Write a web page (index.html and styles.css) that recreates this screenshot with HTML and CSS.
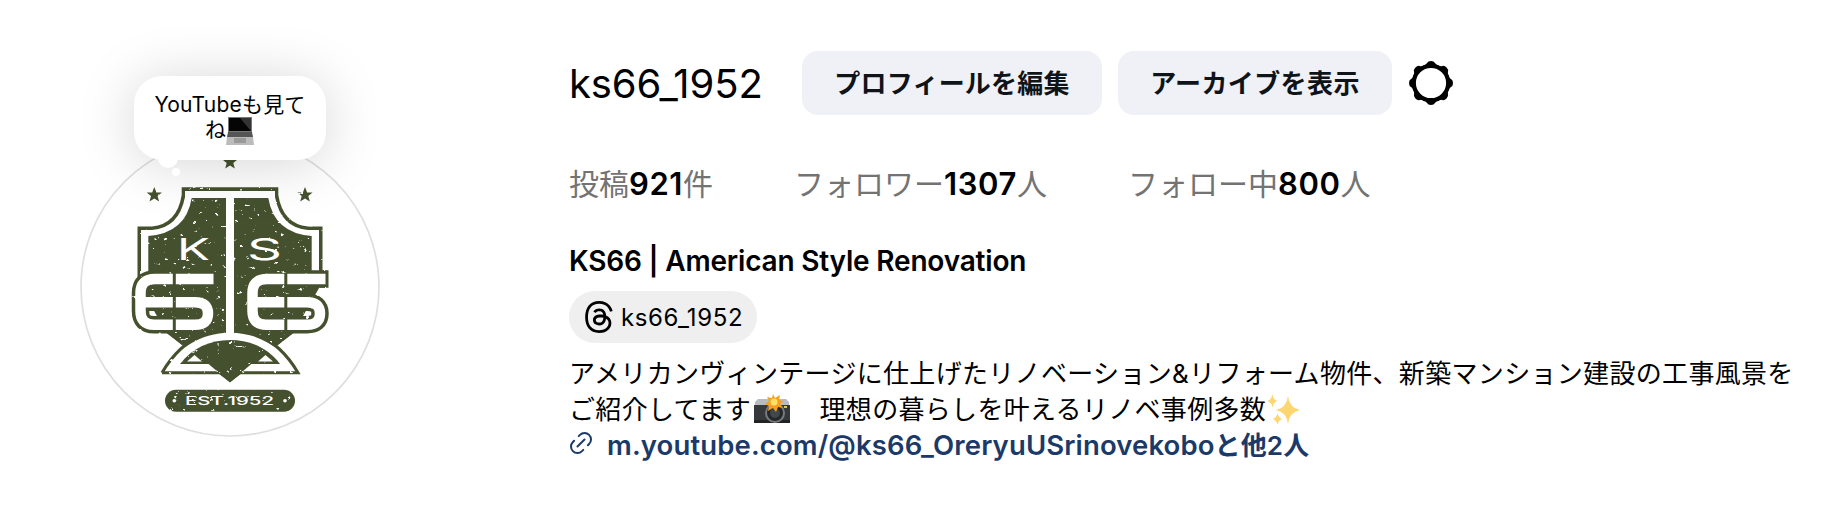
FILE: index.html
```html
<!DOCTYPE html>
<html lang="ja">

    <head>
        <meta charset="UTF-8">
        <meta name="viewport" content="width=device-width, initial-scale=1.0">
        <title>ks66_1952</title>

        <link rel="stylesheet" href="styles.css">
    </head>

    <body>

        <main class="profile">
            <div class="avatar">
                <svg class="logo" viewBox="0 0 300 300">
                    <defs>
                        <filter id="worn" filterUnits="userSpaceOnUse" x="0" y="0" width="300" height="300">
                            <feTurbulence type="fractalNoise" baseFrequency="0.17 0.24" numOctaves="4" seed="8" result="noise"/>
                            <feColorMatrix in="noise" type="matrix" values="0 0 0 0 0  0 0 0 0 0  0 0 0 0 0  14 0 0 0 -10" result="specks"/>
                            <feComposite in="SourceGraphic" in2="specks" operator="out"/>
                        </filter>
                        <path id="star" d="M0-8 2.1-2.6 7.6-2.5 3.3 1 4.8 6.5 0 3.4-4.8 6.5-3.3 1-7.6-2.5-2.1-2.6z"/>
                        <path id="six" d="M133.500 142H75Q60.500 142 60.500 156V174Q60.500 187.700 74 187.700H115Q128 187.700 128 176.500T115 165.300H61"/>
                    </defs>

                    <circle class="ring" cx="150" cy="150" r="149"/>

                    <g class="green" filter="url(#worn)">
                        <use href="#star" x="150" y="25"/>
                        <use href="#star" x="74.3" y="58"/>
                        <use href="#star" x="225" y="58"/>

                        <!-- shield -->
                        <path d="M101.7 50.3H198.3V58Q203 87 228 89.5H242.5V145L213.3 196 150 245.3 86.7 196 57.5 145V89.5H72Q97 87 101.7 58z"/>
                        <path class="white" d="M105 54H195V60Q201 91 228 93H239V145H61V93H72Q99 91 105 60z"/>
                        <path d="M111.7 61H188.3Q194 96 231.7 99V145L213.3 196 150 245.3 86.7 196 68.3 145V99Q106 96 111.7 61z"/>
                        <rect class="white" x="146" y="58" width="8" height="142"/>

                        <!-- 66 -->
                        <use class="outline" href="#six"/>
                        <use class="outline" href="#six" x="112"/>
                        <path class="outline" d="M240 142H248.500"/>
                        <use class="number" href="#six"/>
                        <use class="number" href="#six" x="112"/>
                        <rect class="white" x="146" y="130" width="8" height="70"/>
                        <path d="M92.800 136h3v60h-3zM204.300 136h3v60h-3z"/>

                        <!-- dome -->
                        <path class="white" d="M82 236C96 212 120 195.700 150 195.700S204 212 218 236z"/>
                        <path class="line" d="M82 235.700H218C204 212 187 201.500 176 197M82 235.700C96 212 113 201.500 124 197"/>
                        <path d="M100 227C112 211 130 203 150 203S188 211 200 227z"/>
                        <path class="white" d="M107 224.500 114.500 218 122 224.500zM193 224.500 185.500 218 178 224.500z"/>
                        <path d="M118 218H182L150 245.300z"/>

                        <rect x="85" y="252.700" width="130" height="22" rx="11"/>
                        <circle class="white" cx="94.300" cy="263.700" r="1.800"/>
                        <circle class="white" cx="205" cy="263.700" r="1.800"/>
                    </g>

                    <text class="letter" x="97" y="123.300" textLength="33" lengthAdjust="spacingAndGlyphs">K</text>
                    <text class="letter" x="167" y="123.300" textLength="35" lengthAdjust="spacingAndGlyphs">S</text>
                    <text class="est" x="105" y="267.800" textLength="89" lengthAdjust="spacingAndGlyphs">EST.1952</text>
                </svg>

                <div class="note">
                    YouTubeも見て<br>ね<svg class="laptop" viewBox="0 0 28 28">
                        <path fill="#777" d="M2 0h24v17H2z"/>
                        <path fill="#050505" d="M3 1h22v13H3z"/>
                        <path fill="#333" d="M14 1h11v13z"/>
                        <path fill="#555" d="M2 15h24l1 5H1z"/>
                        <path fill="#bbb" d="M1 20h26l1 8H0z"/>
                        <path fill="#999" d="M8 21h12v5H8z"/>
                    </svg>
                </div>
            </div>

            <section class="info">
                <div class="top">
                    <h1>ks66_1952</h1>
                    <button class="edit">プロフィールを編集</button>
                    <button class="archive">アーカイブを表示</button>
                    <svg class="gear" viewBox="0 0 44 44">
                        <circle cx="22" cy="22" r="17.200" fill="none" stroke="#000" stroke-width="4.200"/>
                        <path d="M14 5Q17 4 18 2 19 0 22 0T26 2Q27 4 30 5z"/>
                        <path d="M14 5Q17 4 18 2 19 0 22 0T26 2Q27 4 30 5z" transform="rotate(45 22 22)"/>
                        <path d="M14 5Q17 4 18 2 19 0 22 0T26 2Q27 4 30 5z" transform="rotate(90 22 22)"/>
                        <path d="M14 5Q17 4 18 2 19 0 22 0T26 2Q27 4 30 5z" transform="rotate(135 22 22)"/>
                        <path d="M14 5Q17 4 18 2 19 0 22 0T26 2Q27 4 30 5z" transform="rotate(180 22 22)"/>
                        <path d="M14 5Q17 4 18 2 19 0 22 0T26 2Q27 4 30 5z" transform="rotate(225 22 22)"/>
                        <path d="M14 5Q17 4 18 2 19 0 22 0T26 2Q27 4 30 5z" transform="rotate(270 22 22)"/>
                        <path d="M14 5Q17 4 18 2 19 0 22 0T26 2Q27 4 30 5z" transform="rotate(315 22 22)"/>
                    </svg>
                </div>

                <ul class="stats">
                    <li>投稿<b>921</b>件</li>
                    <li>フォロワー<b>1307</b>人</li>
                    <li>フォロー中<b>800</b>人</li>
                </ul>

                <h2>KS66 | American Style Renovation</h2>

                <a class="threads">
                    <svg viewBox="0 0 192 192">
                        <path d="M141.537 88.9883C140.71 88.5919 139.87 88.2104 139.019 87.8451C137.537 60.5382 122.616 44.905 97.5619 44.745C97.4484 44.7443 97.3355 44.7443 97.222 44.7443C82.2364 44.7443 69.7731 51.1409 62.102 62.7807L75.881 72.2328C81.6116 63.5383 90.6052 61.6848 97.2286 61.6848C97.3051 61.6848 97.3819 61.6848 97.4576 61.6855C105.707 61.7381 111.932 64.1366 115.961 68.814C118.893 72.2193 120.854 76.925 121.825 82.8638C114.511 81.6207 106.601 81.2385 98.145 81.7233C74.3247 83.0954 59.0111 96.9879 60.0396 116.292C60.5615 126.084 65.4397 134.508 73.775 140.011C80.8224 144.663 89.899 146.938 99.3323 146.423C111.79 145.74 121.563 140.987 128.381 132.296C133.559 125.696 136.834 117.143 138.28 106.366C144.217 109.949 148.617 114.664 151.047 120.332C155.179 129.967 155.42 145.8 142.501 158.708C131.182 170.016 117.576 174.908 97.0135 175.059C74.2042 174.89 56.9538 167.575 45.7381 153.317C35.2355 139.966 29.8077 120.682 29.6052 96C29.8077 71.3178 35.2355 52.0336 45.7381 38.6827C56.9538 24.4249 74.2039 17.11 97.0132 16.9405C119.988 17.1113 137.539 24.4614 149.184 38.788C154.894 45.8136 159.199 54.6488 162.037 64.9503L178.184 60.6422C174.744 47.9622 169.331 37.0357 161.965 27.974C147.036 9.60668 125.202 0.195148 97.0695 0H96.9569C68.8816 0.19447 47.2921 9.6418 32.7883 28.0793C19.8819 44.4864 13.2244 67.3157 13.0007 95.9325L13 96L13.0007 96.0675C13.2244 124.684 19.8819 147.514 32.7883 163.921C47.2921 182.358 68.8816 191.806 96.9569 192H97.0695C122.03 191.827 139.624 185.292 154.118 170.811C173.081 151.866 172.51 128.119 166.26 113.541C161.776 103.087 153.227 94.5962 141.537 88.9883ZM98.4405 129.507C88.0005 130.095 77.1544 125.409 76.6196 115.372C76.2232 107.93 81.9158 99.626 99.0812 98.6368C101.047 98.5234 102.976 98.468 104.871 98.468C111.106 98.468 116.939 99.0737 122.242 100.233C120.264 124.935 108.662 128.946 98.4405 129.507Z"/>
                    </svg>
                    <span>ks66_1952</span>
                </a>

                <p class="bio">アメリカンヴィンテージに仕上げたリノベーション&amp;リフォーム物件、新築マンション建設の工事風景を<br>ご紹介してます<svg class="camera" viewBox="0 0 36 30">
                        <path fill="#b9bcbe" d="M1 8l3-3h28l3 3v5H1z"/>
                        <path fill="#36393b" d="M0 11h36v18H0z"/>
                        <path fill="#222" d="M0 26h36v3H0z"/>
                        <circle cx="21" cy="19" r="10" fill="#777b7e"/>
                        <circle cx="21" cy="19" r="8" fill="#25282a"/>
                        <circle cx="21" cy="19" r="5" fill="#42474b"/>
                        <path fill="#f5a01f" d="M19 0l2 4 5-3-1 5 5 1-4 3 3 4-5-1-2 5-3-4-5 3 1-5-4-2 4-3-2-4 5 1z"/>
                        <circle cx="20" cy="8" r="3.500" fill="#ffe06a"/>
                        <path fill="#e6c84a" d="M30 12h3v2h-3z"/>
                    </svg>　理想の暮らしを叶えるリノベ事例多数<svg class="sparkles" viewBox="0 0 32 32">
                        <path fill="#fbd671" d="M20 2q1.500 12 12 14-10.500 2-12 14-1.500-12-12-14 10.500-2 12-14z"/>
                        <path fill="#fbd671" d="M4.500 0q.8 6 5 7-4.200 1-5 7-.8-6-5-7 4.200-1 5-7zM9.500 19q.8 5 5 6-4.200 1-5 6-.8-5-5-6 4.200-1 5-6z"/>
                    </svg></p>

                <a class="link">
                    <svg viewBox="0 0 24 24">
                        <path d="m9.726 5.123 1.228-1.228a6.470 6.470 0 0 1 9.150 9.152l-1.227 1.227m-4.603 4.603-1.228 1.228a6.470 6.470 0 0 1-9.150-9.152l1.227-1.227M8.471 15.529l7.058-7.058"/>
                    </svg>
                    <span>m.youtube.com/@ks66_OreryuUSrinovekobo<span class="others">と他2人</span></span>
                </a>
            </section>
        </main>

    </body>

</html>
```
FILE: styles.css
```css
body {
    font-family: Inter, "Noto Sans CJK JP", sans-serif;
    background-color: #fff;
    color: #000;
    margin: 0;
    padding: 0;
}

.profile {
    display: flex;
    gap: 189px;
    min-height: 506px;
    padding: 51px 0 0 80px;
    box-sizing: border-box;
}

.avatar {
    position: relative;
    width: 300px;
    height: 300px;
    margin-top: 86px;
    flex-shrink: 0;
}

.logo {
    display: block;
    width: 300px;
    height: 300px;
}

.ring {
    fill: none;
    stroke: #dfdfdf;
    stroke-width: 1.7px;
}

.green {
    fill: #45512f;
}

.white {
    fill: #fff;
}

.outline {
    fill: none;
    stroke: #45512f;
    stroke-width: 17.5px;
}

.number {
    fill: none;
    stroke: #fff;
    stroke-width: 10.5px;
}

.line {
    fill: none;
    stroke: #45512f;
    stroke-width: 3px;
}

.letter {
    font-size: 30px;
    font-weight: 400;
    fill: #fff;
}

.est {
    font-size: 11.5px;
    font-weight: 500;
    fill: #fff;
}

.note {
    position: absolute;
    left: 54px;
    top: -61px;
    width: 192px;
    height: 84px;
    padding-top: 16px;
    box-sizing: border-box;
    border-radius: 28px;
    background-color: #fff;
    box-shadow: 0 4px 56px rgba(0, 0, 0, 0.17);
    font-size: 21px;
    line-height: 25px;
    letter-spacing: 0.2px;
    text-align: center;
}

.note::before,
.note::after {
    content: "";
    position: absolute;
    border-radius: 50%;
    background-color: #fff;
}

.note::before {
    left: 24px;
    top: 72px;
    width: 20px;
    height: 20px;
}

.note::after {
    left: 38px;
    top: 92px;
    width: 8px;
    height: 8px;
}

.laptop {
    width: 28px;
    height: 28px;
    margin: -6px 1px -4px 0;
    vertical-align: -4px;
}

.info {
    display: flex;
    flex-direction: column;
    align-items: flex-start;
}

.top {
    display: flex;
    align-items: center;
    height: 64px;
}

h1 {
    width: 233px;
    margin: 0;
    font-size: 40px;
    font-weight: 400;
    letter-spacing: -0.1px;
}

button {
    width: 300px;
    height: 64px;
    padding: 0 0 3px;
    margin-right: 16px;
    background-color: #eff1f6;
    color: #0f1419;
    border: none;
    border-radius: 16px;
    font-family: "Noto Sans CJK JP", sans-serif;
    font-size: 26px;
    font-weight: 700;
    letter-spacing: 0.2px;
}

.archive {
    width: 274px;
    letter-spacing: 0.4px;
}

.gear {
    width: 44px;
    height: 44px;
    margin-left: 1px;
}

.stats {
    display: flex;
    gap: 81px;
    margin: 48px 0 0;
    padding: 0;
    list-style: none;
    font-size: 30px;
    line-height: 42px;
    color: #737373;
}

.stats b {
    font-size: 31px;
    font-weight: 600;
    letter-spacing: 0.6px;
    color: #000;
}

h2 {
    margin: 38px 0 0;
    font-size: 28px;
    font-weight: 600;
    line-height: 36px;
    letter-spacing: -0.19px;
}

.threads {
    display: flex;
    align-items: center;
    gap: 6px;
    width: 188px;
    height: 52px;
    margin-top: 12px;
    padding-left: 14px;
    box-sizing: border-box;
    border-radius: 26px;
    background-color: #efefef;
    font-size: 24px;
    letter-spacing: 0.6px;
}

.threads svg {
    width: 32px;
    height: 32px;
}

.bio {
    margin: 13px 0 0;
    font-size: 26px;
    line-height: 36px;
    letter-spacing: 0.32px;
    white-space: nowrap;
}

.camera {
    width: 36px;
    height: 30px;
    margin: 0 3px;
    vertical-align: -5px;
}

.sparkles {
    width: 32px;
    height: 32px;
    margin-left: 2px;
    vertical-align: -7px;
}

.link {
    display: flex;
    align-items: center;
    gap: 14px;
    height: 32px;
    margin-top: -1px;
    color: #1c3a69;
    font-size: 27.5px;
    font-weight: 600;
    letter-spacing: 0.13px;
}

.others {
    font-size: 26px;
}

.link svg {
    width: 24px;
    height: 24px;
    fill: none;
    stroke: #1c3a69;
    stroke-width: 2px;
    stroke-linecap: round;
}
```
